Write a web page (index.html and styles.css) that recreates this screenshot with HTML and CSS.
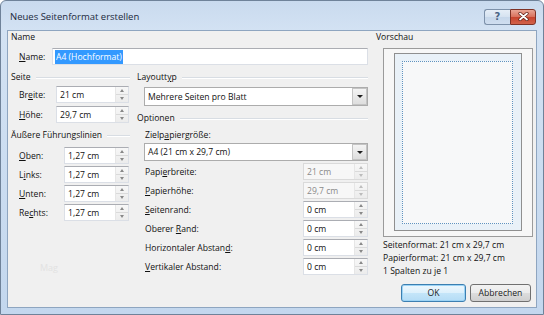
FILE: index.html
```html
<!DOCTYPE html>
<html lang="de">
<head>
<meta charset="utf-8">
<title>Neues Seitenformat erstellen</title>
<link rel="stylesheet" href="styles.css">
</head>
<body>
<div class="window">
  <div class="titlebar">
    <span class="title">Neues Seitenformat erstellen</span>
    <div class="capbtns">
      <span class="capbtn help">?</span>
      <span class="capbtn close">
        <svg width="11" height="9" viewBox="0 0 11 9"><path d="M2 1.5 L9 7.5 M9 1.5 L2 7.5" stroke="#5a1a10" stroke-width="3.2" stroke-linecap="round"/><path d="M2 1.5 L9 7.5 M9 1.5 L2 7.5" stroke="#fff" stroke-width="1.8" stroke-linecap="round"/></svg>
      </span>
    </div>
  </div>
  <div class="client">
    <div class="main">
      <div class="head">Name</div>
      <div class="row name-row">
        <label class="lbl w-name"><u>N</u>ame:</label>
        <div class="field name-field"><span class="sel-text">A4 (Hochformat)</span></div>
      </div>
      <div class="cols">
        <div class="left">
          <div class="head lined">Seite</div>
          <div class="row r-first">
            <label class="lbl w-seite">Br<u>e</u>ite:</label>
            <div class="field spinfield w-seitein"><span class="val">21 cm</span><span class="spin"><i class="up"></i><i class="dn"></i></span></div>
          </div>
          <div class="row r-gap3">
            <label class="lbl w-seite"><u>H</u>öhe:</label>
            <div class="field spinfield w-seitein"><span class="val">29,7 cm</span><span class="spin"><i class="up"></i><i class="dn"></i></span></div>
          </div>
          <div class="head lined h-guides">Äußere Führungslinien</div>
          <div class="row r-first2">
            <label class="lbl w-guide"><u>O</u>ben:</label>
            <div class="field spinfield w-guidein"><span class="val">1,27 cm</span><span class="spin"><i class="up"></i><i class="dn"></i></span></div>
          </div>
          <div class="row r-gap2">
            <label class="lbl w-guide">L<u>i</u>nks:</label>
            <div class="field spinfield w-guidein"><span class="val">1,27 cm</span><span class="spin"><i class="up"></i><i class="dn"></i></span></div>
          </div>
          <div class="row r-gap2">
            <label class="lbl w-guide"><u>U</u>nten:</label>
            <div class="field spinfield w-guidein"><span class="val">1,27 cm</span><span class="spin"><i class="up"></i><i class="dn"></i></span></div>
          </div>
          <div class="row r-gap2">
            <label class="lbl w-guide">Re<u>c</u>hts:</label>
            <div class="field spinfield w-guidein"><span class="val">1,27 cm</span><span class="spin"><i class="up"></i><i class="dn"></i></span></div>
          </div>
          <div class="ghost">Mag</div>
        </div>
        <div class="right">
          <div class="head lined">Layoutt<u>y</u>p</div>
          <div class="combo c-layout"><span class="val">Mehrere Seiten pro Blatt</span><span class="arrow"><i></i></span></div>
          <div class="head lined h-opt">Optionen</div>
          <div class="sublbl">Zielp<u>a</u>piergröße:</div>
          <div class="combo c-paper"><span class="val">A4 (21 cm x 29,7 cm)</span><span class="arrow"><i></i></span></div>
          <div class="row optrow r-gap2">
            <label class="lbl">Papi<u>e</u>rbreite:</label>
            <div class="field spinfield w-opt disabled"><span class="val">21 cm</span><span class="spin"><i class="up"></i><i class="dn"></i></span></div>
          </div>
          <div class="row optrow r-gap2">
            <label class="lbl"><u>P</u>apierhöhe:</label>
            <div class="field spinfield w-opt disabled"><span class="val">29,7 cm</span><span class="spin"><i class="up"></i><i class="dn"></i></span></div>
          </div>
          <div class="row optrow r-gap2">
            <label class="lbl"><u>S</u>eitenrand:</label>
            <div class="field spinfield w-opt"><span class="val">0 cm</span><span class="spin"><i class="up"></i><i class="dn"></i></span></div>
          </div>
          <div class="row optrow r-gap2">
            <label class="lbl">Oberer <u>R</u>and:</label>
            <div class="field spinfield w-opt"><span class="val">0 cm</span><span class="spin"><i class="up"></i><i class="dn"></i></span></div>
          </div>
          <div class="row optrow r-gap2">
            <label class="lbl">Horizontaler Abstan<u>d</u>:</label>
            <div class="field spinfield w-opt"><span class="val">0 cm</span><span class="spin"><i class="up"></i><i class="dn"></i></span></div>
          </div>
          <div class="row optrow r-gap2">
            <label class="lbl"><u>V</u>ertikaler Abstand:</label>
            <div class="field spinfield w-opt"><span class="val">0 cm</span><span class="spin"><i class="up"></i><i class="dn"></i></span></div>
          </div>
        </div>
      </div>
    </div>
    <div class="side">
      <div class="head h-preview">Vorschau</div>
      <div class="preview">
        <div class="page">
          <div class="margins"></div>
        </div>
      </div>
      <div class="info">
        <div>Seitenformat: 21 cm x 29,7 cm</div>
        <div>Papierformat: 21 cm x 29,7 cm</div>
        <div>1 Spalten zu je 1</div>
      </div>
      <div class="buttons">
        <span class="btn default">OK</span>
        <span class="btn cancel">Abbrechen</span>
      </div>
    </div>
  </div>
</div>
</body>
</html>
```
FILE: styles.css
```css
html, body {
  margin: 0;
  padding: 0;
  width: 544px;
  height: 315px;
  overflow: hidden;
  background: #ffffff;
}

.window {
  box-sizing: border-box;
  width: 544px;
  height: 315px;
  display: flex;
  flex-direction: column;
  border: 1px solid #6f8299;
  border-radius: 6px 6px 0 0;
  background: linear-gradient(to bottom, #c9daee 0px, #d3e2f3 30px, #c3d7ee 100%);
  font-family: "Open Sans", "Noto Sans", sans-serif;
  font-size: 8.6px;
  color: #111111;
}

.titlebar {
  height: 29px;
  flex: none;
  display: flex;
  align-items: center;
  justify-content: space-between;
  padding: 0 7px 0 9px;
}

.title {
  font-size: 9.5px;
  color: #1c2a3c;
  margin-top: 2px;
}

.capbtns {
  display: flex;
  margin-top: 2px;
}

.capbtn {
  box-sizing: border-box;
  height: 16px;
  display: flex;
  align-items: center;
  justify-content: center;
  border: 1px solid #7d91aa;
}

.help {
  width: 26px;
  border-radius: 3px 0 0 3px;
  border-right: none;
  background: linear-gradient(to bottom, #e6eef7 0%, #d5e2f0 50%, #c6d7ea 51%, #d0def0 100%);
  color: #4a6485;
  font-family: "DejaVu Sans", sans-serif;
  font-weight: bold;
  font-size: 10px;
}

.close {
  width: 26px;
  border-radius: 0 3px 3px 0;
  border-color: #7e3226;
  background: linear-gradient(to bottom, #e9a595 0%, #d8705b 50%, #c7432d 51%, #d2624a 100%);
}

.client {
  flex: 1;
  display: flex;
  margin: 0 6px 6px 6px;
  border: 1px solid #8ea5c0;
  background: #f0f0f0;
}

.main {
  width: 359px;
  padding-left: 3px;
  display: flex;
  flex-direction: column;
}

.head {
  height: 13px;
  line-height: 11px;
  display: flex;
  align-items: center;
  white-space: nowrap;
}

.head.lined::after {
  content: "";
  flex: 1;
  margin-left: 5px;
  height: 0;
  border-top: 1px solid #d8dde3;
  border-bottom: 1px solid #ffffff;
}

.row {
  display: flex;
  align-items: center;
  height: 17px;
}

.lbl {
  box-sizing: border-box;
  padding-left: 8px;
  white-space: nowrap;
}

.field {
  box-sizing: border-box;
  height: 17px;
  background: #ffffff;
  border: 1px solid #dbdfe6;
  border-top-color: #abadb3;
  display: flex;
  align-items: center;
  position: relative;
  white-space: nowrap;
}

.field .val {
  padding-left: 3px;
  flex: 1;
}

.name-row {
  margin-top: 4px;
}

.w-name { width: 41px; }

.name-field {
  width: 316px;
  padding-left: 2px;
}

.sel-text {
  background: #3399ff;
  color: #ffffff;
  padding: 1px 1px;
  line-height: 12px;
}

.cols {
  display: flex;
  margin-top: 6px;
}

.left {
  width: 119px;
  display: flex;
  flex-direction: column;
}

.r-first { margin-top: 2px; }
.r-first2 { margin-top: 5px; }
.r-gap3 { margin-top: 3px; }
.r-gap2 { margin-top: 2px; }

.h-guides { margin-top: 6px; }

.w-seite { width: 45px; }
.w-seitein { width: 73px; }
.w-guide { width: 53px; }
.w-guidein { width: 65px; }

.spin {
  box-sizing: border-box;
  width: 13px;
  height: 15px;
  display: flex;
  flex-direction: column;
  border-left: 1px solid #e6e6e6;
  background: linear-gradient(to bottom, #f7f7f7, #ececec);
}

.spin i {
  flex: 1;
  display: flex;
  align-items: center;
  justify-content: center;
}

.spin i.up {
  border-bottom: 1px solid #dadada;
}

.spin i::before {
  content: "";
  width: 0;
  height: 0;
  border-left: 2.5px solid transparent;
  border-right: 2.5px solid transparent;
}

.spin i.up::before {
  border-bottom: 3px solid #888888;
}

.spin i.dn::before {
  border-top: 3px solid #888888;
}

.disabled {
  background: #f7f7f7;
  border-color: #dadada;
  color: #8a8a8a;
}

.disabled .spin i::before {
  opacity: 0.5;
}

.ghost {
  margin-top: 40px;
  margin-left: 29px;
  color: #e2e2e2;
  font-size: 9px;
}

.right {
  width: 231px;
  margin-left: 7px;
  display: flex;
  flex-direction: column;
}

.combo {
  box-sizing: border-box;
  margin-left: 7px;
  width: 224px;
  background: #ffffff;
  border: 1px solid #acacac;
  display: flex;
  align-items: center;
  white-space: nowrap;
}

.combo .val {
  flex: 1;
  padding-left: 3px;
}

.c-layout {
  height: 19px;
  margin-top: 3px;
}

.c-paper {
  height: 18px;
  margin-top: 1px;
}

.combo .arrow {
  box-sizing: border-box;
  width: 15px;
  height: 100%;
  border: 1px solid #c4c4c4;
  background: linear-gradient(to bottom, #f4f4f4, #dedede);
  display: flex;
  align-items: center;
  justify-content: center;
}

.combo .arrow i {
  width: 0;
  height: 0;
  border-left: 3px solid transparent;
  border-right: 3px solid transparent;
  border-top: 3px solid #1e1e1e;
}

.h-opt { margin-top: 6px; }

.sublbl {
  margin-top: 4px;
  padding-left: 8px;
  height: 13px;
  line-height: 13px;
}

.optrow {
  justify-content: space-between;
}

.w-opt { width: 65px; }

.side {
  flex: 1;
  display: flex;
  flex-direction: column;
}

.h-preview {
  padding-left: 6px;
}

.preview {
  box-sizing: border-box;
  margin: 4px 0 0 13px;
  width: 150px;
  height: 189px;
  border: 1px solid #9b9b9b;
  background: #f7f7f7;
  padding: 4px 10px 5px 10px;
  display: flex;
}

.page {
  box-sizing: border-box;
  flex: 1;
  border: 1px solid #8f8f8f;
  background: #e9f1f8;
  padding: 7px 8px 6px 7px;
  display: flex;
}

.margins {
  flex: 1;
  border: 1px dotted #5f93c0;
  background: #f7f8f9;
}

.info {
  margin: 2px 0 0 13px;
  line-height: 13px;
  white-space: nowrap;
}

.buttons {
  display: flex;
  margin: 6px 0 0 31px;
  gap: 4px;
}

.btn {
  box-sizing: border-box;
  height: 18px;
  display: flex;
  align-items: center;
  justify-content: center;
  border: 1px solid #707070;
  border-radius: 3px;
  background: linear-gradient(to bottom, #f2f2f2 0%, #ebebeb 50%, #dddddd 51%, #cfcfcf 100%);
  color: #1b1b1b;
}

.btn.default {
  width: 65px;
  border-color: #3c7fb1;
  box-shadow: inset 0 0 0 1px #9bd3f5;
  background: linear-gradient(to bottom, #eef7fd 0%, #dcf0fc 50%, #c4e5f9 51%, #b4dcf6 100%);
}

.btn.cancel {
  width: 61px;
}
```
